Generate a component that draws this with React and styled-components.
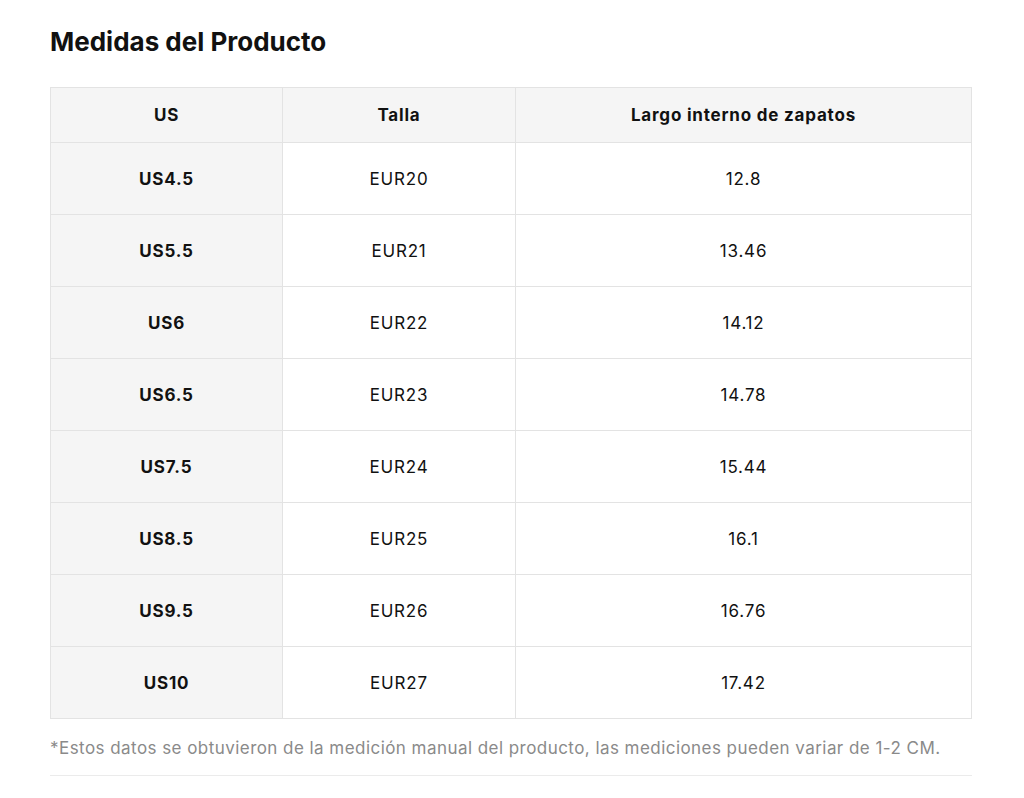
import React from "react";
import styled, { createGlobalStyle } from "styled-components";

const rows = [
  ["US4.5", "EUR20", "12.8"],
  ["US5.5", "EUR21", "13.46"],
  ["US6", "EUR22", "14.12"],
  ["US6.5", "EUR23", "14.78"],
  ["US7.5", "EUR24", "15.44"],
  ["US8.5", "EUR25", "16.1"],
  ["US9.5", "EUR26", "16.76"],
  ["US10", "EUR27", "17.42"],
];

const GlobalStyle = createGlobalStyle`
  body {
    margin: 0;
    background: #fff;
    font-family: Inter, "Noto Sans", sans-serif;
    color: #111;
  }
`;

const App = () => {
  return (
    <Page>
      <GlobalStyle />
      <Title>Medidas del Producto</Title>
      <Table>
        <colgroup>
          <col style={{ width: 232 }} />
          <col style={{ width: 233 }} />
          <col />
        </colgroup>
        <thead>
          <tr>
            <HeadCell>US</HeadCell>
            <HeadCell>Talla</HeadCell>
            <HeadCell>Largo interno de zapatos</HeadCell>
          </tr>
        </thead>
        <tbody>
          {rows.map(([us, eur, len]) => (
            <tr key={us}>
              <Cell $label>{us}</Cell>
              <Cell>{eur}</Cell>
              <Cell>{len}</Cell>
            </tr>
          ))}
        </tbody>
      </Table>
      <Note>
        *Estos datos se obtuvieron de la medición manual del producto, las
        mediciones pueden variar de 1-2 CM.
      </Note>
    </Page>
  );
};

const Page = styled.div`
  width: 922px;
  padding: 26px 0 0 50px;
`;

const Title = styled.h2`
  margin: 0 0 30px;
  font-size: 26px;
  line-height: 31px;
  font-weight: 700;
  letter-spacing: 0;
  color: #111;
`;

const Table = styled.table`
  width: 100%;
  border-collapse: collapse;
  table-layout: fixed;
  border: 1px solid #e3e3e3;
`;

const HeadCell = styled.th`
  height: 54px;
  padding: 0;
  background: #f5f5f5;
  border: 1px solid #e3e3e3;
  font-size: 17px;
  font-weight: 700;
  letter-spacing: 0.8px;
  text-align: center;
  color: #111;
`;

const Cell = styled.td`
  height: 71px;
  padding: 0;
  border: 1px solid #e3e3e3;
  text-align: center;
  font-size: 17px;
  letter-spacing: 0.8px;
  font-weight: ${(p) => (p.$label ? 700 : 400)};
  background: ${(p) => (p.$label ? "#f5f5f5" : "#fff")};
  color: #111;
`;

const Note = styled.p`
  margin: 0;
  padding: 19px 0 17px;
  font-size: 17px;
  line-height: 20px;
  letter-spacing: 0.45px;
  color: #8a8a8a;
  border-bottom: 1px solid #ebebeb;
`;

export default App;
